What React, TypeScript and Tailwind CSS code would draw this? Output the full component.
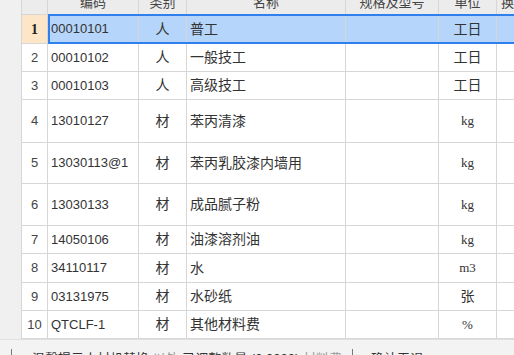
import React from "react";

type Row = {
  no: number;
  code: string;
  cat: string;
  name: string;
  unit: string;
  h: string;
};

const rows: Row[] = [
  { no: 1, code: "00010101", cat: "人", name: "普工", unit: "工日", h: "h-[29px]" },
  { no: 2, code: "00010102", cat: "人", name: "一般技工", unit: "工日", h: "h-[28px]" },
  { no: 3, code: "00010103", cat: "人", name: "高级技工", unit: "工日", h: "h-[28px]" },
  { no: 4, code: "13010127", cat: "材", name: "苯丙清漆", unit: "kg", h: "h-[43px]" },
  { no: 5, code: "13030113@1", cat: "材", name: "苯丙乳胶漆内墙用", unit: "kg", h: "h-[41px]" },
  { no: 6, code: "13030133", cat: "材", name: "成品腻子粉", unit: "kg", h: "h-[42px]" },
  { no: 7, code: "14050106", cat: "材", name: "油漆溶剂油", unit: "kg", h: "h-[28px]" },
  { no: 8, code: "34110117", cat: "材", name: "水", unit: "m3", h: "h-[29px]" },
  { no: 9, code: "03131975", cat: "材", name: "水砂纸", unit: "张", h: "h-[28px]" },
  { no: 10, code: "QTCLF-1", cat: "材", name: "其他材料费", unit: "%", h: "h-[28px]" },
];

const cell = "border-r border-b border-[#d6d6d6] flex items-center shrink-0";
const latin = /[a-z%0-9]/;

export default function App() {
  return (
    <div
      className="w-[514px] h-[355px] overflow-hidden bg-white text-[#333] flex flex-col"
      style={{ fontFamily: '"Liberation Sans", "Noto Sans CJK SC", sans-serif' }}
    >
      <div className="flex flex-1 min-h-0">
        {/* left gutter */}
        <div className="w-[22px] shrink-0 bg-[#f0f0f0] border-r border-[#d6d6d6]" />

        <div className="flex-1 flex flex-col min-w-0 overflow-hidden">
          {/* header, scrolled partly out of view */}
          <div className="flex h-[24px] -mt-[9px] bg-[#ececec] text-[13px] text-[#444]">
            <div className={`${cell} w-[26px]`} />
            <div className={`${cell} w-[91px] justify-center`}>编码</div>
            <div className={`${cell} w-[48px] justify-center`}>类别</div>
            <div className={`${cell} w-[159px] justify-center`}>名称</div>
            <div className={`${cell} w-[93px] justify-center`}>规格及型号</div>
            <div className={`${cell} w-[58px] justify-center`}>单位</div>
            <div className={`${cell} w-[30px] pl-[4px]`}>换</div>
          </div>

          {rows.map((r) => {
            const sel = r.no === 1;
            return (
              <div key={r.no} className={`flex ${r.h}`}>
                <div
                  className={`${cell} w-[26px] justify-center ${
                    sel
                      ? "bg-[#fde6c8] font-bold text-[14px] text-[#222]"
                      : "text-[13px] text-[#444]"
                  }`}
                  style={sel ? { fontFamily: '"Liberation Serif", serif' } : undefined}
                >
                  {r.no}
                </div>
                <div className={`flex flex-1 ${sel ? "relative bg-[#b6d5fa]" : ""}`}>
                  <div className={`${cell} w-[91px] pl-[3px] text-[13px]`}>{r.code}</div>
                  <div className={`${cell} w-[48px] justify-center text-[14px]`}>{r.cat}</div>
                  <div className={`${cell} w-[159px] pl-[3px] text-[14px]`}>{r.name}</div>
                  <div className={`${cell} w-[93px]`} />
                  <div
                    className={`${cell} w-[58px] justify-center ${
                      latin.test(r.unit) ? "text-[13px]" : "text-[14px]"
                    }`}
                    style={
                      latin.test(r.unit)
                        ? { fontFamily: '"Liberation Serif", "DejaVu Serif", serif' }
                        : undefined
                    }
                  >
                    {r.unit}
                  </div>
                  <div className={`${cell} w-[30px]`} />
                  {sel && (
                    <div className="absolute inset-0 -top-[1px] border-2 border-r-0 border-[#2f80ed] pointer-events-none" />
                  )}
                </div>
              </div>
            );
          })}
        </div>
      </div>

      {/* status bar, partly cut off */}
      <div className="h-[16px] shrink-0 bg-[#f3f3f3] border-t border-[#e0e0e0] flex items-start pt-[9px] text-[13px] leading-[16px] overflow-hidden">
        <div className="ml-[11px] w-px h-[10px] bg-[#777]" />
        <span className="ml-[20px] mt-[2px] whitespace-nowrap text-[#333]">
          温馨提示人材机替换
          <span className="text-[#999]"> 以外 </span>
          已调整数量 (0.0000)
          <span className="text-[#999]"> 材料费 </span>
        </span>
        <div className="ml-[10px] w-px h-[10px] bg-[#777]" />
        <span className="ml-[18px] mt-[2px] whitespace-nowrap text-[#333]">确认无误</span>
      </div>
    </div>
  );
}
